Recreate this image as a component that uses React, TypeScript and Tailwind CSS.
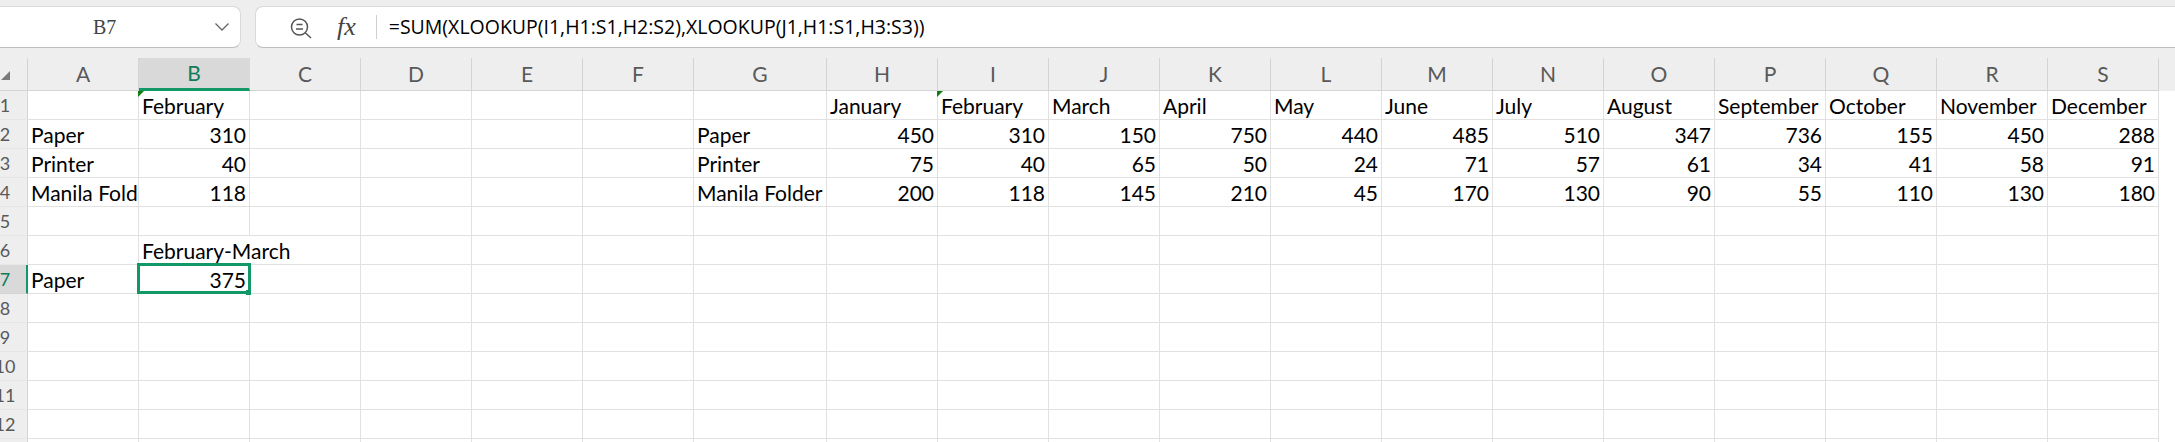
const columns = [
  { label: "A", width: "w-[111px]" },
  { label: "B", width: "w-[111px]" },
  { label: "C", width: "w-[111px]" },
  { label: "D", width: "w-[111px]" },
  { label: "E", width: "w-[111px]" },
  { label: "F", width: "w-[111px]" },
  { label: "G", width: "w-[133px]" },
  ...["H", "I", "J", "K", "L", "M", "N", "O", "P", "Q", "R", "S"].map((label) => ({
    label,
    width: "w-[111px]",
  })),
];

const months = ["January", "February", "March", "April", "May", "June", "July", "August", "September", "October", "November", "December"];

const sales: Record<string, (string | number)[]> = {
  "2": ["Paper", 450, 310, 150, 750, 440, 485, 510, 347, 736, 155, 450, 288],
  "3": ["Printer", 75, 40, 65, 50, 24, 71, 57, 61, 34, 41, 58, 91],
  "4": ["Manila Folder", 200, 118, 145, 210, 45, 170, 130, 90, 55, 110, 130, 180],
};

// sheet contents, keyed by row number then column letter
const sheet: Record<number, Record<string, string | number>> = {
  1: { B: "February" },
  2: { A: "Paper", B: 310 },
  3: { A: "Printer", B: 40 },
  4: { A: "Manila Fold", B: 118 },
  6: { B: "February-March" },
  7: { A: "Paper", B: 375 },
};

months.forEach((month, i) => {
  sheet[1][columns[7 + i].label] = month;
});
[2, 3, 4].forEach((row) => {
  sales[String(row)].forEach((value, i) => {
    sheet[row][columns[6 + i].label] = value;
  });
});

const rows = [1, 2, 3, 4, 5, 6, 7, 8, 9, 10, 11, 12, 13];

const Cell = ({ row, col, width }: { row: number; col: string; width: string }) => {
  const value = sheet[row]?.[col];
  const isNumber = typeof value === "number";
  const spills = row === 6 && col === "B";
  const hasFlag = row === 1 && (col === "B" || col === "I");
  const selected = row === 7 && col === "B";

  return (
    <div
      className={`relative h-[29px] shrink-0 border-b border-[#e1e1e1] ${width} ${
        spills ? "border-r-0 pr-px" : "border-r"
      }`}
    >
      {value !== undefined && (
        <div
          className={`flex h-full items-center text-[21px] leading-none text-black ${
            isNumber ? "justify-end pr-[3px]" : "pl-[3px]"
          } ${spills ? "w-[200px] whitespace-nowrap" : "overflow-hidden whitespace-nowrap"}`}
        >
          {value}
        </div>
      )}
      {hasFlag && (
        <div className="absolute -left-px top-0 h-0 w-0 border-t-[6px] border-r-[6px] border-t-[#107c10] border-r-transparent" />
      )}
      {selected && (
        <>
          <div className="absolute -left-[2px] -top-[2px] z-10 h-[31px] w-[114px] border-[3px] border-[#129866]" />
          <div className="absolute -bottom-[2px] -right-[2px] z-10 h-[5px] w-[5px] bg-[#129866]" />
        </>
      )}
    </div>
  );
};

const App = () => {
  return (
    <div className="h-[442px] w-[2175px] overflow-hidden bg-white font-['Lato',sans-serif]">
      <div className="flex h-[58px] items-start gap-[14px] bg-[#eeeeee] pt-[6px]">
        <div className="-ml-px flex h-[42px] w-[242px] items-center rounded-r-lg border border-l-0 border-[#d9d9d9] border-b-[#bdbdbd] bg-white">
          <span className="ml-[94px] text-[20px] text-[#444444] font-['Liberation_Serif',serif]">B7</span>
          <svg className="ml-auto mr-[10px] h-[16px] w-[16px]" viewBox="0 0 16 16" fill="none" stroke="#666666" strokeWidth="1.3">
            <path d="M1.5 4.5 8 11l6.5-6.5" />
          </svg>
        </div>
        <div className="flex h-[42px] flex-1 items-center rounded-l-lg border border-r-0 border-[#d9d9d9] border-b-[#bdbdbd] bg-white">
          <svg className="ml-[33px] h-[24px] w-[24px]" viewBox="0 0 24 24" fill="none" stroke="#555555" strokeWidth="1.5">
            <circle cx="10.5" cy="12" r="8" />
            <path d="M7.5 9.5h6M7 14h7M16.5 18l5.5 5" />
          </svg>
          <span className="ml-[24px] text-[26px] italic leading-none text-[#444444] font-['Liberation_Serif',serif]">fx</span>
          <div className="ml-[20px] h-[24px] w-px bg-[#cfcfcf]" />
          <span className="ml-[12px] text-[19.5px] text-black font-['Open_Sans',sans-serif]">
            =SUM(XLOOKUP(I1,H1:S1,H2:S2),XLOOKUP(J1,H1:S1,H3:S3))
          </span>
        </div>
      </div>

      <div className="flex h-[33px] bg-[#eeeeee]">
        <div className="relative h-[33px] w-[28px] shrink-0 border-r border-b border-[#d4d4d4]">
          <div className="absolute bottom-[10px] left-px h-0 w-0 border-b-[9px] border-l-[9px] border-b-[#7a7a7a] border-l-transparent" />
        </div>
        {columns.map((col) => (
          <div
            key={col.label}
            className={`flex h-[33px] shrink-0 items-center justify-center border-r text-[21px] ${col.width} ${
              col.label === "B"
                ? "border-b-[3px] border-[#d9d9d9] border-b-[#129866] bg-[#d9d9d9] text-[#107c5a]"
                : "border-b border-[#d4d4d4] text-[#595959]"
            }`}
          >
            {col.label}
          </div>
        ))}
      </div>

      {rows.map((row) => (
        <div key={row} className="flex">
          <div
            className={`flex h-[29px] w-[28px] shrink-0 items-center border-b text-[18px] ${
              row === 7
                ? "border-r-[2px] border-b-[#d4d4d4] border-r-[#129866] bg-[#d9d9d9] text-[#107c5a]"
                : "border-r border-[#d4d4d4] border-b-[#e6e6e6] bg-[#eeeeee] text-[#595959]"
            }`}
          >
            {/* the crop cuts the row header, so the numbers sit left of its middle */}
            <span className="-ml-[9px] w-[28px] shrink-0 text-center">{row}</span>
          </div>
          {columns.map((col) => (
            <Cell key={col.label} row={row} col={col.label} width={col.width} />
          ))}
        </div>
      ))}
    </div>
  );
};

export default App;
